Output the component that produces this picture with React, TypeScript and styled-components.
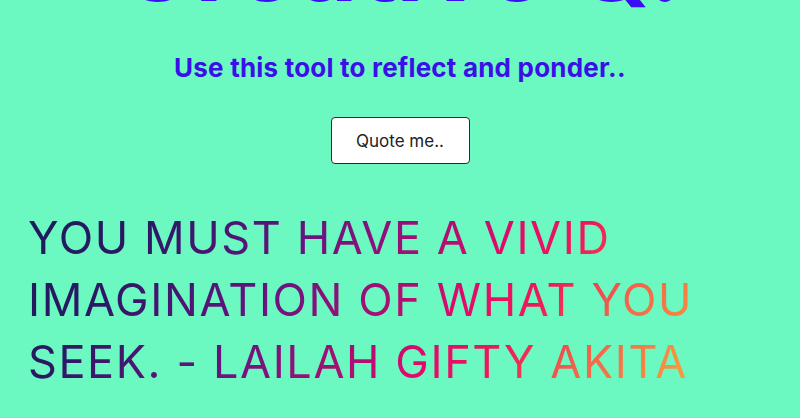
import React from "react";
import styled, { createGlobalStyle } from "styled-components";

const Global = createGlobalStyle`
  html, body { margin: 0; padding: 0; }
  body {
    background: #6cf8c1;
    font-family: Inter, "Noto Sans", sans-serif;
    overflow: hidden;
  }
`;

const Page = styled.main`
  width: 800px;
  height: 418px;
  background: #6cf8c1;
  display: flex;
  flex-direction: column;
  align-items: center;
  overflow: hidden;
`;

const Title = styled.h1`
  margin: -88px 0 0;
  font-family: Inter, sans-serif;
  font-weight: 700;
  font-size: 104px;
  line-height: 102px;
  color: #3b0df5;
  letter-spacing: 0;
  white-space: nowrap;
`;

const Subtitle = styled.p`
  margin: 38px 0 0;
  font-family: Inter, sans-serif;
  font-weight: 700;
  font-size: 26px;
  line-height: 32px;
  letter-spacing: 0.2px;
  color: #3a10e6;
`;

const QuoteButton = styled.button`
  margin-top: 33px;
  width: 139px;
  height: 47px;
  background: #ffffff;
  border: 1px solid #2a2a2a;
  border-radius: 4px;
  font-family: Inter, sans-serif;
  font-size: 17px;
  color: #222;
  cursor: pointer;
`;

const Quote = styled.p`
  align-self: stretch;
  margin: 43px 28px 0;
  font-family: Inter, sans-serif;
  font-weight: 400;
  font-size: 45px;
  line-height: 62px;
  letter-spacing: 1.6px;
  text-transform: uppercase;
  background: linear-gradient(
    125deg,
    #1d1c5a 0%,
    #2a1865 15%,
    #6a1480 35%,
    #b00e72 50%,
    #e6096a 58%,
    #f0185a 66%,
    #f2604c 75%,
    #f59a40 88%,
    #f7a840 100%
  );
  -webkit-background-clip: text;
  background-clip: text;
  color: transparent;
`;

export default function App() {
  return (
    <>
      <Global />
      <Page>
        <Title>Creative Q.</Title>
        <Subtitle>Use this tool to reflect and ponder..</Subtitle>
        <QuoteButton>Quote me..</QuoteButton>
        <Quote>You must have a vivid imagination of what you seek. - Lailah Gifty Akita</Quote>
      </Page>
    </>
  );
}
